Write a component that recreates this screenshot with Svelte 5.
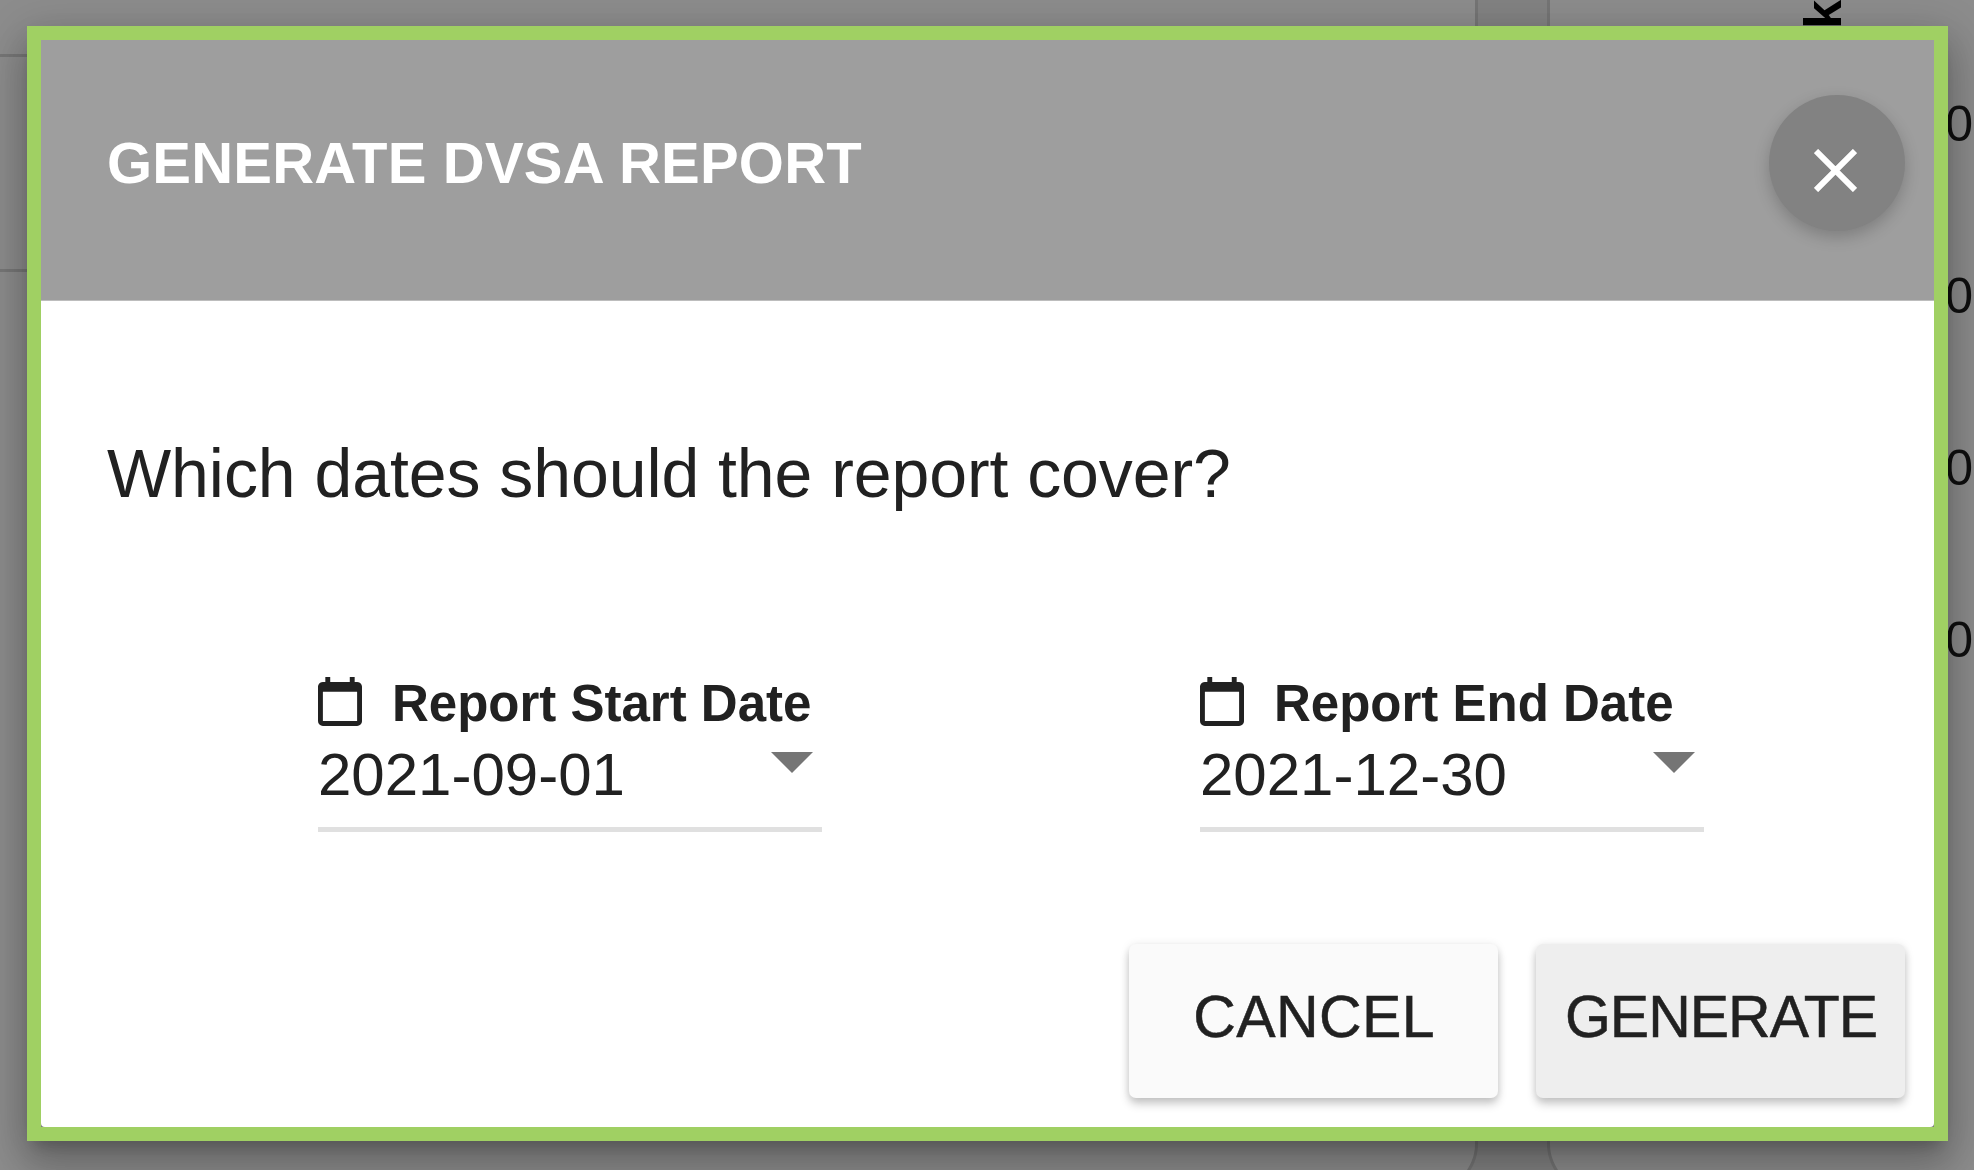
<script lang="ts">
  const fields = [
    { label: "Report Start Date", value: "2021-09-01" },
    { label: "Report End Date", value: "2021-12-30" },
  ];
  const rows = ["0", "0", "0", "0"];
</script>

<div class="page">
  <div class="card left">
    <div class="rule first"></div>
    <div class="rule"></div>
  </div>
  <div class="card right">
    <div class="head"><span class="rotated">kc</span></div>
    {#each rows as n}
      <div class="row">{n}</div>
    {/each}
  </div>
</div>

<div class="scrim">
  <div class="frame">
    <div class="dialog">
      <header>
        <h2>GENERATE DVSA REPORT</h2>
        <button class="close" aria-label="Close">
          <svg viewBox="0 0 43 43" width="43" height="43">
            <path d="M2 2 41 41M41 2 2 41" stroke="#fff" stroke-width="6" fill="none" />
          </svg>
        </button>
      </header>
      <div class="content">
        <p>Which dates should the report cover?</p>
        <div class="fields">
          {#each fields as f}
            <div class="field">
              <div class="label">
                <svg class="cal" viewBox="3 2 18 20" width="44" height="49">
                  <path
                    fill="#212121"
                    d="M19 4h-1V2h-2v2H8V2H6v2H5c-1.11 0-2 .9-2 2v14a2 2 0 002 2h14c1.1 0 2-.9 2-2V6c0-1.1-.9-2-2-2zm0 16H5V8h14v12z"
                  />
                </svg>
                <span>{f.label}</span>
              </div>
              <div class="value">
                <span>{f.value}</span>
                <svg class="arrow" viewBox="0 0 42 21" width="42" height="21">
                  <path d="M0 0h42L21 21z" fill="#757575" />
                </svg>
              </div>
            </div>
          {/each}
        </div>
        <div class="actions">
          <button>CANCEL</button>
          <button class="primary">GENERATE</button>
        </div>
      </div>
    </div>
  </div>
</div>

<style>
  :global(body) {
    overflow: hidden;
    font-family: "Liberation Sans", Arial, sans-serif;
  }

  .page {
    display: flex;
    gap: 75px;
    width: 1974px;
    height: 1170px;
    overflow: hidden;
    background: #ececec;
  }

  .card {
    height: 1190px;
    flex: none;
    background: #fff;
    border-radius: 0 0 46px 46px;
    box-shadow: 0 0 0 3px #d4d4d4;
  }

  .left {
    width: 1475px;
    border-radius: 0 0 46px 0;
  }

  .right {
    width: 424px;
    border-radius: 0 0 0 46px;
  }

  .rule {
    height: 3px;
    margin-top: 212px;
    background: #d8d8d8;
  }

  .rule.first {
    margin-top: 54px;
  }

  .head {
    height: 27px;
    overflow: hidden;
    display: flex;
    justify-content: flex-end;
    align-items: flex-end;
    padding-right: 126px;
  }

  .rotated {
    writing-mode: vertical-rl;
    transform: rotate(180deg);
    font-size: 52px;
    line-height: 50px;
    font-weight: 700;
    color: #000;
    margin-bottom: -2px;
  }

  .row {
    height: 172px;
    padding-right: 1px;
    display: flex;
    align-items: center;
    justify-content: flex-end;
    font-size: 50px;
    color: #1a1a1a;
    position: relative;
    top: 11px;
  }

  .scrim {
    position: fixed;
    inset: 0;
    background: rgba(0, 0, 0, 0.45);
  }

  .frame {
    position: absolute;
    left: 27px;
    top: 26px;
    width: 1921px;
    height: 1115px;
    box-sizing: border-box;
    border: 14px solid #a0d063;
    background: #7c7c7c;
    box-shadow:
      0 11px 15px -7px rgba(0, 0, 0, 0.2),
      0 24px 38px 3px rgba(0, 0, 0, 0.2),
      0 9px 46px 8px rgba(0, 0, 0, 0.14);
  }

  .dialog {
    height: 100%;
    background: #fff;
    border-radius: 0 0 4px 4px;
    overflow: hidden;
    display: flex;
    flex-direction: column;
  }

  header {
    height: 261px;
    flex: none;
    box-sizing: border-box;
    background: #9e9e9e;
    border-bottom: 1px solid #bdbdbd;
    padding: 55px 29px 0 66px;
    display: flex;
    justify-content: space-between;
    align-items: flex-start;
  }

  h2 {
    margin: 34px 0 0;
    font-size: 58px;
    line-height: 68px;
    font-weight: 700;
    letter-spacing: 0.2px;
    color: #fff;
  }

  .close {
    width: 136px;
    height: 136px;
    padding: 14px 4px 0 0;
    border: none;
    border-radius: 50%;
    background: #828282;
    box-shadow: 0 6px 16px rgba(0, 0, 0, 0.2);
    display: flex;
    align-items: center;
    justify-content: center;
  }

  .content {
    flex: 1;
    padding: 132px 29px 29px 66px;
    display: flex;
    flex-direction: column;
  }

  p {
    margin: 0;
    font-size: 68px;
    line-height: 80px;
    letter-spacing: -0.07px;
    color: #212121;
  }

  .fields {
    margin-top: 160px;
    padding-left: 211px;
    display: flex;
    gap: 378px;
  }

  .field {
    width: 504px;
    border-bottom: 5px solid #e0e0e0;
    color: #212121;
  }

  .label {
    height: 60px;
    display: flex;
    align-items: center;
    gap: 30px;
    font-size: 51px;
    font-weight: 700;
  }

  .cal {
    margin-top: -4px;
  }

  .value {
    margin-top: 6px;
    height: 72px;
    padding: 0 9px 16px 0;
    display: flex;
    justify-content: space-between;
    font-size: 60px;
    line-height: 72px;
  }

  .arrow {
    margin-top: 13px;
  }

  .actions {
    margin-top: auto;
    display: flex;
    justify-content: flex-end;
    gap: 38px;
  }

  .actions button {
    width: 369px;
    height: 154px;
    padding: 0 0 8px 1px;
    border: none;
    border-radius: 7px;
    background: #fafafa;
    color: #212121;
    font-family: inherit;
    font-size: 59px;
    letter-spacing: 0.4px;
    -webkit-text-stroke: 0.5px #212121;
    box-shadow:
      0 6px 10px rgba(0, 0, 0, 0.2),
      0 1px 10px rgba(0, 0, 0, 0.1);
  }

  .actions .primary {
    background: #eeeeee;
    letter-spacing: -1px;
  }
</style>
